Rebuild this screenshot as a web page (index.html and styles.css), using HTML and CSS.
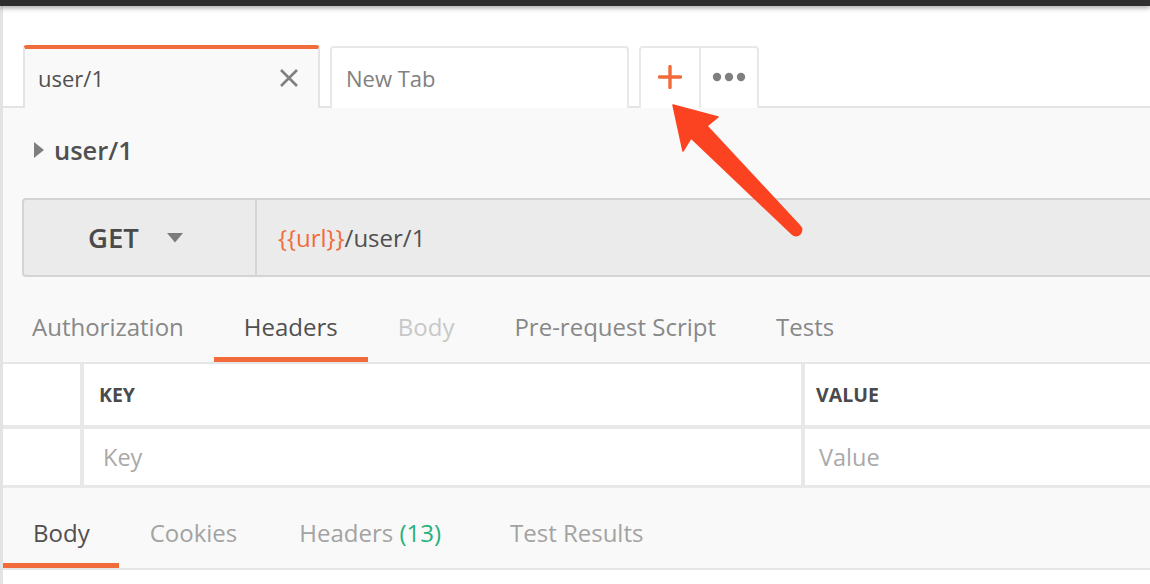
FILE: index.html
```html
<!DOCTYPE html>
<html>
<head>
<meta charset="utf-8">
<link rel="stylesheet" href="styles.css">
</head>
<body>
<div class="topbar"></div>
<div class="app">
  <div class="tabbar">
    <div class="tab tab-active">
      <span class="tab-label">user/1</span>
      <svg class="tab-close" width="20" height="20" viewBox="0 0 20 20"><path d="M2 2 L18 18 M18 2 L2 18" stroke="#808080" stroke-width="2.6" fill="none"/></svg>
    </div>
    <div class="tab tab-new"><span class="tab-label">New Tab</span></div>
    <div class="tab-actions">
      <div class="tab-btn">
        <svg width="24" height="24" viewBox="0 0 24 24"><path d="M12 1.5 V22.5 M1.5 12 H22.5" stroke="#f26b3a" stroke-width="3.4" stroke-linecap="round" fill="none"/></svg>
      </div>
      <div class="tab-btn">
        <svg width="34" height="10" viewBox="0 0 34 10"><circle cx="5" cy="5" r="4.2" fill="#808080"/><circle cx="17" cy="5" r="4.2" fill="#808080"/><circle cx="29" cy="5" r="4.2" fill="#808080"/></svg>
      </div>
    </div>
  </div>

  <div class="request">
    <div class="req-name">
      <svg class="caret-right" width="10" height="16" viewBox="0 0 10 16"><path d="M0 0 L10 8 L0 16 Z" fill="#7f7f7f"/></svg>
      <span>user/1</span>
    </div>

    <div class="urlbar">
      <div class="method">
        <span class="method-name">GET</span>
        <svg width="16" height="10" viewBox="0 0 16 10"><path d="M0 0 H16 L8 9.5 Z" fill="#7b7b7b"/></svg>
      </div>
      <div class="url"><span class="var">{{url}}</span>/user/1</div>
    </div>

    <div class="req-tabs">
      <div class="rtab">Authorization</div>
      <div class="rtab rtab-active">Headers</div>
      <div class="rtab rtab-disabled">Body</div>
      <div class="rtab">Pre-request Script</div>
      <div class="rtab">Tests</div>
    </div>

    <div class="kv">
      <div class="kv-cell"></div>
      <div class="kv-cell kv-head kv-key">KEY</div>
      <div class="kv-cell kv-head kv-val">VALUE</div>
      <div class="kv-cell"></div>
      <div class="kv-cell kv-ph kv-key2">Key</div>
      <div class="kv-cell kv-ph kv-val2">Value</div>
    </div>
  </div>

  <div class="response">
    <div class="res-tabs">
      <div class="rtab rtab-active res-first">Body</div>
      <div class="rtab res-tab">Cookies</div>
      <div class="rtab res-tab res-headers">Headers <span class="count">(13)</span></div>
      <div class="rtab res-tab">Test Results</div>
    </div>
  </div>
  <div class="filler"></div>
</div>

<svg class="annotation" width="1150" height="584" viewBox="0 0 1150 584">
  <path d="M673 105 L718 117 L707 126 L800 226 A5.6 5.6 0 0 1 792 234 L691 138 L683 151 Z" fill="#fc4321" stroke="#fc4321" stroke-width="1.5" stroke-linejoin="round"/>
</svg>
</body>
</html>
```

FILE: styles.css
```css
* { box-sizing: border-box; }
html, body {
  margin: 0;
  padding: 0;
  width: 1150px;
  height: 584px;
  overflow: hidden;
  background: #ffffff;
  font-family: "Open Sans", "Liberation Sans", sans-serif;
  color: #505050;
}
.topbar {
  height: 6px;
  background: #2e2e2e;
  box-shadow: 0 2px 5px rgba(0,0,0,0.35);
  position: relative;
  z-index: 2;
}
.app {
  border-left: 3px solid #e3e3e3;
  height: 578px;
  display: flex;
  flex-direction: column;
}
.tabbar {
  height: 102px;
  display: flex;
  align-items: flex-end;
  padding-left: 20px;
  border-bottom: 2px solid #e4e4e4;
  background: #ffffff;
}
.tab {
  display: flex;
  align-items: center;
  height: 62px;
  margin-bottom: -2px;
  border-radius: 4px 4px 0 0;
  font-size: 22px;
}
.tab-active {
  width: 297px;
  height: 63px;
  background: #f9f9f9;
  border-top: 4px solid #f26b3a;
  border-left: 2px solid #e4e4e4;
  border-right: 2px solid #e4e4e4;
  padding-left: 13px;
  padding-right: 19px;
  padding-bottom: 2px;
  color: #505050;
  justify-content: space-between;
}
.tab-new {
  width: 299px;
  margin-left: 10px;
  background: #ffffff;
  border: 2px solid #e8e8e8;
  border-bottom: none;
  padding-left: 14px;
  padding-bottom: 1px;
  color: #808080;
}
.tab-label { line-height: 28px; }
.tab-close { display: block; }
.tab-actions {
  margin-left: 10px;
  height: 62px;
  margin-bottom: -2px;
  display: flex;
  border: 2px solid #e8e8e8;
  border-bottom: none;
  border-radius: 4px 4px 0 0;
  background: #fff;
}
.tab-btn {
  width: 58px;
  display: flex;
  align-items: center;
  justify-content: center;
  padding-bottom: 2px;
}
.tab-btn + .tab-btn { border-left: 2px solid #e8e8e8; }
.tab-btn svg { display: block; }

.request {
  background: #f9f9f9;
}
.req-name {
  display: flex;
  align-items: center;
  padding: 27px 0 0 31px;
  height: 56px;
  font-size: 25.5px;
  font-weight: 600;
  color: #505050;
}
.req-name span { margin-left: 10px; line-height: 28px; }
.caret-right { display: block; margin-top: 0; }

.urlbar {
  margin: 34px -20px 0 19px;
  height: 79px;
  display: flex;
  background: #ebebeb;
  border: 2px solid #d4d4d4;
  border-radius: 4px 0 0 4px;
}
.method {
  width: 233px;
  border-right: 2px solid #d4d4d4;
  display: flex;
  align-items: center;
  padding-left: 64px;
}
.method-name {
  font-size: 27.5px;
  font-weight: 600;
  color: #4a4a4a;
  margin-right: 28px;
}
.method svg { display: block; }
.url {
  display: flex;
  align-items: center;
  padding-left: 21px;
  font-size: 24px;
  color: #505050;
}
.var { color: #f26b3a; }

.req-tabs, .res-tabs {
  display: flex;
  height: 87px;
  border-bottom: 2px solid #e6e6e6;
}
.rtab {
  padding: 35px 30px 0;
  font-size: 24px;
  line-height: 30px;
  color: #888888;
  height: 85px;
  white-space: nowrap;
}
.req-tabs .rtab:first-child { padding-left: 29px; }
.rtab-active {
  color: #505050;
  border-bottom: 5px solid #f26b3a;
}
.rtab-disabled { color: #c8c8c8; }

.kv {
  display: grid;
  grid-template-columns: 77px 717px 1fr;
  grid-template-rows: 61px 56px;
  column-gap: 4px;
  row-gap: 4px;
  background: #e8e8e8;
  padding-bottom: 3px;
}
.kv-cell {
  background: #ffffff;
  display: flex;
  align-items: center;
}
.kv-head {
  font-size: 19.5px;
  font-weight: 700;
  color: #4a4a4a;
}
.kv-key { padding-left: 15px; }
.kv-val { padding-left: 11px; }
.kv-ph {
  font-size: 23.5px;
  color: #a9a9a9;
}
.kv-key2 { padding-left: 19px; }
.kv-val2 { padding-left: 14px; }

.response {
  background: #f9f9f9;
}
.res-tabs { height: 82px; }
.res-tabs .rtab {
  padding-top: 30px;
  height: 80px;
  color: #a3a3a3;
}
.res-tabs .rtab-active { color: #505050; }
.res-first { padding-left: 30px; padding-right: 29px; }
.res-tab { padding-left: 31px; padding-right: 31px; }
.res-headers { padding-right: 38px; }
.count { color: #26b27c; }
.filler { flex: 1; background: #fff; }

.annotation {
  position: absolute;
  left: 0;
  top: 0;
  pointer-events: none;
}
```
